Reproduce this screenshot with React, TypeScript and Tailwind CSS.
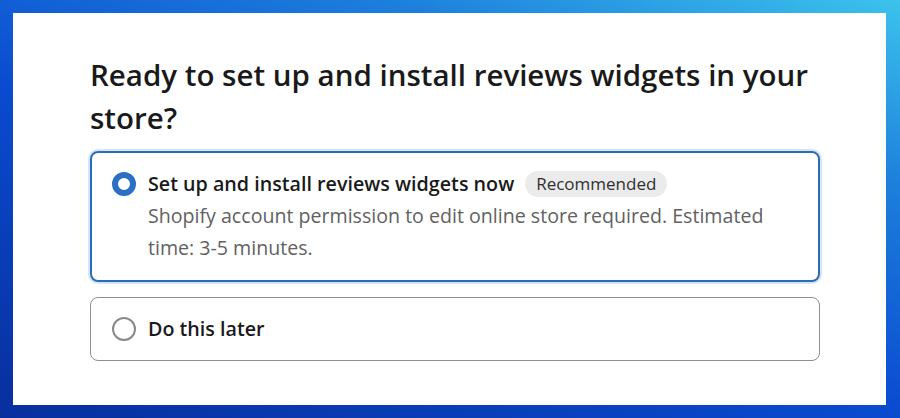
import React from "react";

export default function App() {
  return (
    <div
      className="w-[900px] h-[418px] p-[13px] pr-[14px] pb-[13px] bg-[linear-gradient(200deg,#3cc3ec_0%,#1d7fdc_25%,#0a4bd0_55%,#082f9e_100%)]"
      style={{ fontFamily: '"Open Sans", "Noto Sans", Arial, sans-serif' }}
    >
      <div className="w-full h-full bg-white pl-[77px] pt-[40px]">
        <h1 className="text-[29.5px] leading-[43px] font-semibold text-[#1a1a1a] w-[760px]">
          Ready to set up and install reviews widgets in your store?
        </h1>
        <div className="mt-[12px] w-[730px] flex flex-col gap-[15px]">
          <div className="rounded-[8px] border-2 border-[#2c6bb8] shadow-[0_0_0_2px_#d3e6f8] pl-[20px] pr-[20px] pt-[15px] pb-[17px] flex gap-[12px]">
            <div className="w-[24px] h-[24px] mt-[4px] rounded-full border-[6px] border-[#2a70c2] bg-white shrink-0" />
            <div className="flex flex-col">
              <div className="flex items-center gap-[11px] h-[32px]">
                <span className="text-[19.7px] leading-[32px] font-semibold text-[#1a1a1a]">
                  Set up and install reviews widgets now
                </span>
                <span className="rounded-full bg-[#ebebeb] px-[11px] h-[26px] flex items-center text-[17px] text-[#303030]">
                  Recommended
                </span>
              </div>
              <p className="text-[19.6px] leading-[31.5px] text-[#616161] w-[640px]">
                Shopify account permission to edit online store required. Estimated time: 3-5 minutes.
              </p>
            </div>
          </div>
          <div className="rounded-[8px] border border-[#8f8f8f] h-[64px] pl-[21px] flex items-center gap-[12px]">
            <div className="w-[24px] h-[24px] rounded-full border-2 border-[#8a8a8a] bg-white shrink-0" />
            <span className="text-[19.7px] leading-[28px] font-semibold text-[#1a1a1a]">
              Do this later
            </span>
          </div>
        </div>
      </div>
    </div>
  );
}
